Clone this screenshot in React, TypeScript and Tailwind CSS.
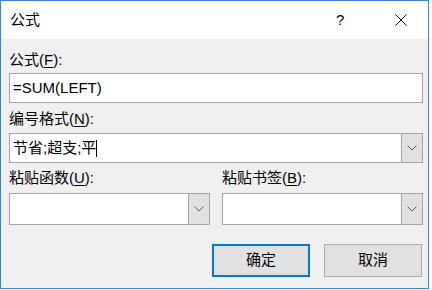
import React from "react";

const Chevron: React.FC = () => (
  <svg width="10" height="6" viewBox="0 0 10 6" fill="none">
    <path d="M0.5 0.5 L5 5 L9.5 0.5" stroke="#5a5a5a" strokeWidth="1" />
  </svg>
);

const Label: React.FC<{ text: string; hot: string; className?: string }> = ({ text, hot, className }) => (
  <div className={`h-[20px] leading-[20px] text-[15px] text-black ${className ?? ""}`}>
    {text}(<span className="underline underline-offset-2">{hot}</span>):
  </div>
);

const Combo: React.FC<{ width: string; height: string; children?: React.ReactNode }> = ({ width, height, children }) => (
  <div className={`flex ${width} ${height} border border-[#a5a5a5] bg-white`}>
    <div className="flex-1 flex items-center pl-[2px] text-[15px] text-black">{children}</div>
    <div className="w-[22px] -my-px -mr-px border border-[#a5a5a5] bg-[#e1e1e1] flex items-center justify-center">
      <Chevron />
    </div>
  </div>
);

export default function App() {
  return (
    <div className="w-[432px] h-[290px] bg-white font-['Liberation_Sans','Noto_Sans_CJK_SC',sans-serif]">
      <div className="w-[429px] h-[289px] border border-[#3a86d2] flex flex-col">
        {/* title bar */}
        <div className="h-[38px] bg-white flex items-center pl-[9px] text-[15px] text-black">
          <span className="flex-1">公式</span>
          <span className="w-[10px] text-[15px] mr-[49px]">?</span>
          <svg width="12" height="12" viewBox="0 0 12 12" className="mr-[21px]">
            <path d="M0.5 0.5 L11.5 11.5 M11.5 0.5 L0.5 11.5" stroke="#111" strokeWidth="1" />
          </svg>
        </div>

        {/* body */}
        <div className="flex-1 bg-[#f0f0f0] pl-[8px] pt-[11px]">
          <Label text="公式" hot="F" />
          <div className="mt-[3px] w-[414px] h-[30px] border border-[#a5a5a5] bg-white flex items-center pl-[3px] text-[15px] text-black">
            =SUM(LEFT)
          </div>

          <Label text="编号格式" hot="N" className="mt-[6px]" />
          <div className="mt-[4px]">
            <Combo width="w-[414px]" height="h-[30px]">
              <span className="pl-px">节省;超支;平</span>
              <span className="inline-block w-px h-[17px] bg-black" />
            </Combo>
          </div>

          <div className="mt-[5px] flex">
            <div className="w-[213px]">
              <Label text="粘贴函数" hot="U" />
              <div className="mt-[5px]">
                <Combo width="w-[201px]" height="h-[32px]" />
              </div>
            </div>
            <div>
              <Label text="粘贴书签" hot="B" />
              <div className="mt-[5px]">
                <Combo width="w-[201px]" height="h-[32px]" />
              </div>
            </div>
          </div>

          <div className="mt-[19px] flex pl-[203px] gap-[14px]">
            <button className="w-[98px] h-[33px] border-2 border-[#0078d7] bg-[#e1e1e1] text-[15px] text-black">
              确定
            </button>
            <button className="w-[98px] h-[33px] border border-[#adadad] bg-[#e1e1e1] text-[15px] text-black">
              取消
            </button>
          </div>
        </div>
      </div>
    </div>
  );
}
